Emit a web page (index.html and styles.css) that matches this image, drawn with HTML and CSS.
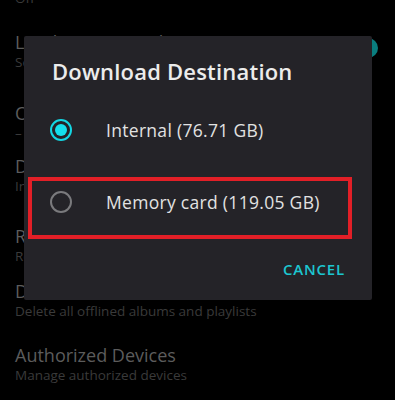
FILE: index.html
```html
<!DOCTYPE html>
<html lang="en">
<head>
  <meta charset="UTF-8">
  <meta name="viewport" content="width=device-width, initial-scale=1.0">
  <title>Settings</title>
  <link rel="stylesheet" href="styles.css">
</head>
<body>
  <div class="screen">
    <!-- settings list behind the dialog -->
    <ul class="settings">
      <li class="item">
        <div class="item-text">
          <p class="item-title">Streaming</p>
          <p class="item-sub">Off</p>
        </div>
      </li>
      <li class="item">
        <div class="item-text">
          <p class="item-title">Loudness Normalization</p>
          <p class="item-sub">Set the same volume level for all tracks</p>
        </div>
        <span class="toggle"></span>
      </li>
      <li class="item">
        <div class="item-text">
          <p class="item-title">Offline Mode</p>
          <p class="item-sub">&ndash;</p>
        </div>
      </li>
      <li class="item">
        <div class="item-text">
          <p class="item-title">Download Destination</p>
          <p class="item-sub">Internal</p>
        </div>
      </li>
      <li class="item">
        <div class="item-text">
          <p class="item-title">Rescan Storage</p>
          <p class="item-sub">Rescan offline content</p>
        </div>
      </li>
      <li class="item">
        <div class="item-text">
          <p class="item-title">Delete Offline Content</p>
          <p class="item-sub">Delete all offlined albums and playlists</p>
        </div>
      </li>
      <li class="item">
        <div class="item-text">
          <p class="item-title">Authorized Devices</p>
          <p class="item-sub">Manage authorized devices</p>
        </div>
      </li>
    </ul>

    <!-- dialog -->
    <div class="dialog">
      <h2 class="dialog-title">Download Destination</h2>
      <div class="option">
        <span class="radio checked"></span>
        <span class="option-label">Internal (76.71 GB)</span>
      </div>
      <div class="option">
        <span class="radio"></span>
        <span class="option-label">Memory card (119.05 GB)</span>
      </div>
      <div class="actions">
        <button class="btn-text">CANCEL</button>
      </div>
      <div class="highlight"></div>
    </div>
  </div>
</body>
</html>
```

FILE: styles.css
```css
/* base */
body {
  margin: 0;
  padding: 0;
  background-color: #000;
  font-family: 'Open Sans', 'Noto Sans', sans-serif;
}

.screen {
  position: relative;
  width: 395px;
  height: 400px;
  overflow: hidden;
  background-color: #000;
}

/* settings list */
.settings {
  list-style: none;
  margin: -32px 0 0 0;
  padding: 0 0 0 15px;
}

.item {
  display: flex;
  justify-content: space-between;
  align-items: center;
  padding-right: 17px;
}

.item:nth-child(2) { margin-top: 25px; }
.item:nth-child(3) { margin-top: 32px; }
.item:nth-child(4) { margin-top: 14px; }
.item:nth-child(5) { margin-top: 31px; }
.item:nth-child(6) { margin-top: 16px; }
.item:nth-child(7) { margin-top: 25px; }

.item-title {
  margin: 0;
  font-size: 18px;
  line-height: 20px;
  color: #5c5c5c;
}

.item-sub {
  margin: 2px 0 0 0;
  font-size: 13.5px;
  line-height: 17px;
  color: #3a3a3a;
}

.toggle {
  width: 20px;
  height: 20px;
  border-radius: 50%;
  background-color: #0a7d7e;
  margin-top: -8px;
}

/* dialog */
.dialog {
  position: absolute;
  left: 24px;
  top: 36px;
  width: 348px;
  height: 264px;
  box-sizing: border-box;
  padding: 23px 27px 0 26px;
  background-color: #242328;
  border-radius: 2px;
}

.dialog-title {
  margin: 0 0 10px 2px;
  font-size: 22px;
  line-height: 25px;
  font-weight: 600;
  letter-spacing: 0.2px;
  color: #ececec;
}

.option {
  display: flex;
  align-items: center;
  height: 72px;
}

.radio {
  width: 22px;
  height: 22px;
  box-sizing: border-box;
  border: 2px solid #7a7a7d;
  border-radius: 50%;
  display: flex;
  align-items: center;
  justify-content: center;
  flex-shrink: 0;
}

.radio.checked {
  border-color: #14d6e2;
}

.radio.checked::after {
  content: '';
  width: 12px;
  height: 12px;
  border-radius: 50%;
  background-color: #14e0ec;
}

.option-label {
  margin-left: 34px;
  font-size: 17.5px;
  letter-spacing: 0.3px;
  color: #e2e2e2;
}

.actions {
  display: flex;
  justify-content: flex-end;
  margin-top: 13px;
}

.btn-text {
  border: none;
  background: none;
  padding: 0;
  height: 36px;
  font-family: inherit;
  font-size: 15px;
  font-weight: 600;
  letter-spacing: 0.8px;
  color: #1cc6d0;
  cursor: pointer;
}

/* red annotation box */
.highlight {
  position: absolute;
  left: 4px;
  top: 141px;
  width: 324px;
  height: 62px;
  box-sizing: border-box;
  border: 4px solid #e21f27;
}
```
